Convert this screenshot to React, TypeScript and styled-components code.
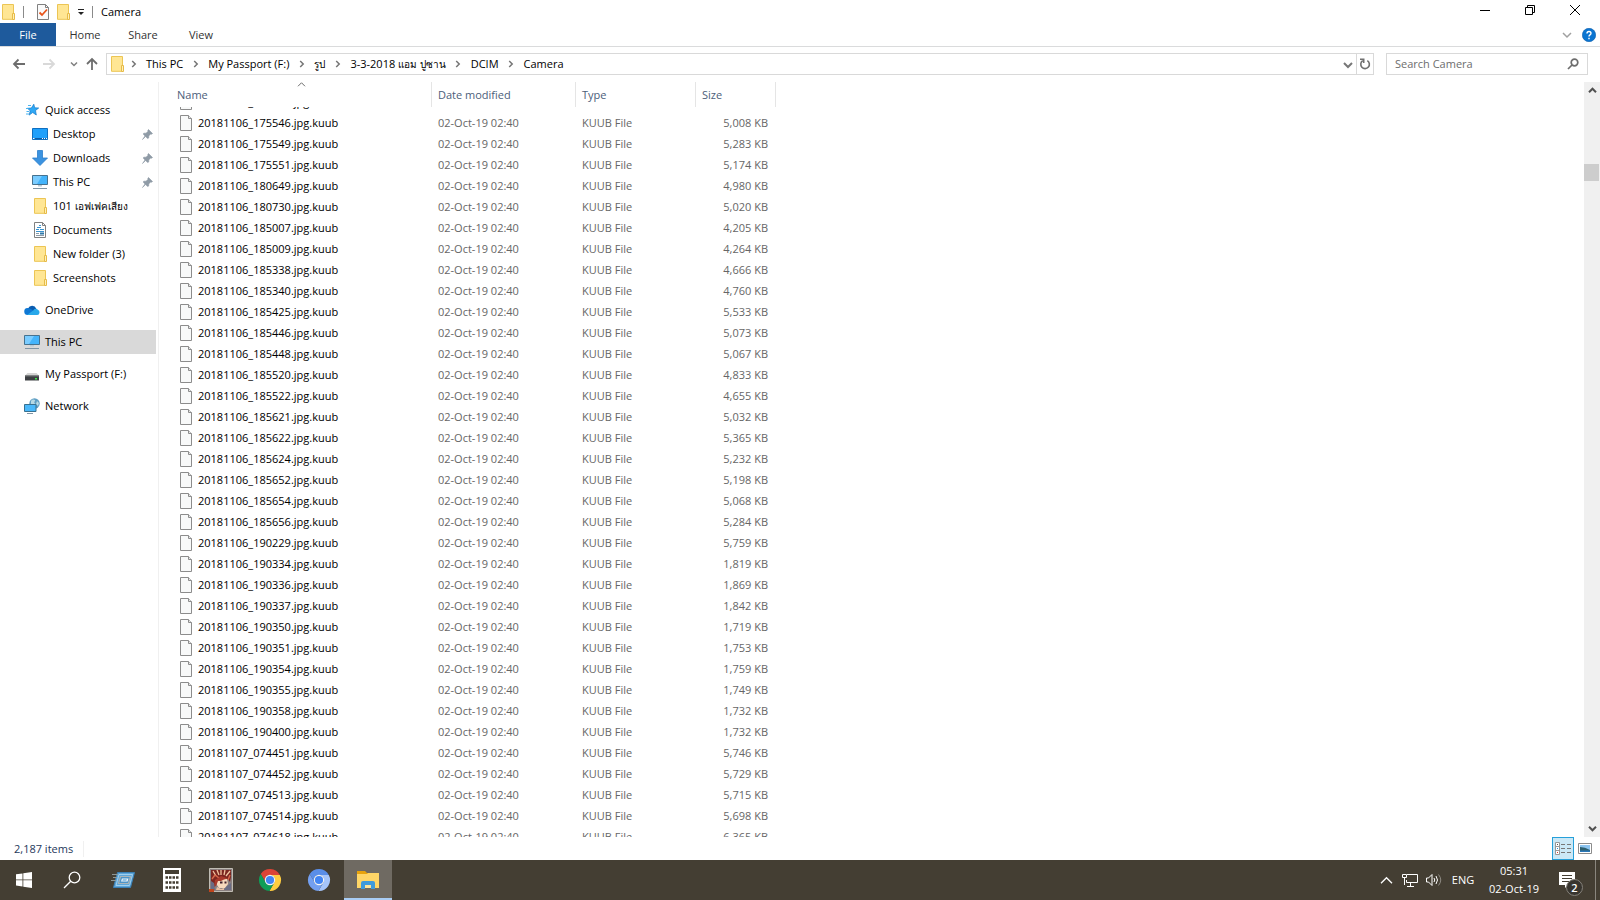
import React, { useLayoutEffect, useRef } from "react";
import styled, { createGlobalStyle, css } from "styled-components";

const GlobalStyle = createGlobalStyle`
  *, *::before, *::after { box-sizing: border-box; }
  body {
    margin: 0;
    background: #fff;
    color: #000;
    font: 11px/16px "Open Sans", "Noto Sans", "Liberation Sans", sans-serif;
  }
  button, input { font: inherit; color: inherit; }
  svg { display: block; flex: none; }
`;

const Window = styled.div`
  display: flex;
  flex-direction: column;
  height: 100vh;
  overflow: hidden;
`;

const PlainButton = styled.button`
  display: flex;
  align-items: center;
  justify-content: center;
  padding: 0;
  border: 0;
  background: none;
`;

/* ---------- title bar ---------- */

const TitleBar = styled.header`
  display: flex;
  align-items: center;
  height: 23px;
  padding-right: 3px;
`;

const QuickTools = styled.div`
  display: flex;
  align-items: center;
  gap: 6px;
`;

const TitleDivider = styled.span`
  width: 1px;
  height: 12px;
  margin: 0 1px;
  background: #8a8a8a;
`;

const WindowTitle = styled.h1`
  flex: 1;
  margin: 0 0 0 7px;
  font-size: 11px;
  font-weight: 400;
`;

const CaptionButton = styled(PlainButton)`
  align-self: flex-start;
  width: 45px;
  height: 20px;
`;

/* ---------- ribbon tabs ---------- */

const Ribbon = styled.nav`
  display: flex;
  align-items: center;
  height: 24px;
  border-bottom: 1px solid #dadbdc;
`;

const RibbonTab = styled.button<{ $file?: boolean }>`
  height: 23px;
  padding: 0;
  border: 0;
  width: ${(p) => (p.$file ? 56 : 58)}px;
  background: ${(p) => (p.$file ? "#1e5a9c" : "none")};
  color: ${(p) => (p.$file ? "#fff" : "#333")};
`;

const RibbonEnd = styled.div`
  display: flex;
  align-items: center;
  gap: 10px;
  margin-left: auto;
  padding-right: 4px;
`;

/* ---------- address row ---------- */

const AddressRow = styled.div`
  display: flex;
  align-items: center;
  height: 35px;
  padding: 0 12px 1px 11px;
`;

const NavButtons = styled.div`
  display: flex;
  align-items: center;
  width: 95px;
`;

const NavButton = styled(PlainButton)<{ $w: number }>`
  width: ${(p) => p.$w}px;
  height: 22px;
`;

const AddressBox = styled.div`
  display: flex;
  flex: 1;
  height: 22px;
  border: 1px solid #d9d9d9;
`;

const Crumbs = styled.ol`
  display: flex;
  flex: 1;
  align-items: center;
  margin: 0;
  padding: 0 0 0 2px;
  list-style: none;
`;

const CrumbRoot = styled.li`
  width: 12px;
`;

const Crumb = styled.li`
  display: flex;
  align-items: center;
`;

const CrumbChevron = styled.span`
  display: flex;
  justify-content: center;
  width: 25px;
`;

const CrumbLink = styled.a`
  color: #000;
  text-decoration: none;
  white-space: nowrap;
`;

const RefreshButton = styled(PlainButton)`
  width: 17px;
  border-left: 1px solid #d9d9d9;
`;

const SearchBox = styled.label`
  display: flex;
  align-items: center;
  width: 202px;
  height: 22px;
  margin-left: 12px;
  padding: 0 8px;
  border: 1px solid #d9d9d9;
`;

const SearchInput = styled.input`
  flex: 1;
  min-width: 0;
  padding: 0;
  border: 0;
  outline: 0;
  background: none;
  &::placeholder { color: #6d6d6d; opacity: 1; }
`;

/* ---------- body ---------- */

const Body = styled.div`
  display: flex;
  flex: 1;
  min-height: 0;
`;

const Sidebar = styled.nav`
  display: flex;
  flex-direction: column;
  gap: 8px;
  width: 159px;
  padding: 16px 2px 0 0;
  border-right: 1px solid #f0f0f0;
`;

const TreeGroup = styled.ul`
  margin: 0;
  padding: 0;
  list-style: none;
`;

const TreeLink = styled.a<{ $child?: boolean; $selected?: boolean }>`
  display: flex;
  align-items: center;
  gap: 5px;
  height: 24px;
  padding: 0 3px 0 ${(p) => (p.$child ? 32 : 24)}px;
  background: ${(p) => (p.$selected ? "#d9d9d9" : "none")};
  color: #000;
  text-decoration: none;
  white-space: nowrap;
`;

const TreeLabel = styled.span`
  flex: 1;
`;

const Thai = styled.span`
  font-size: 10px;
`;

const ListPane = styled.main`
  flex: 1;
  min-width: 0;
  overflow-y: auto;
  scrollbar-width: none;
`;

const FileTable = styled.table`
  width: 617px;
  table-layout: fixed;
  border-collapse: separate;
  border-spacing: 0;
`;

const ColumnHead = styled.th<{ $w: number; $first?: boolean }>`
  position: sticky;
  top: 0;
  width: ${(p) => p.$w}px;
  height: 25px;
  padding: 0 0 0 ${(p) => (p.$first ? 18 : 6)}px;
  border-right: 1px solid #e5e5e5;
  background: #fff;
  color: #4c607a;
  font-weight: 400;
  text-align: left;
`;

const SortMark = styled.span`
  position: absolute;
  top: -2px;
  left: calc(50% + 2px);
`;

const cell = css`
  height: 21px;
  padding: 0 8px 0 6px;
  color: #666;
  white-space: nowrap;
`;

const Cell = styled.td<{ $right?: boolean }>`
  ${cell}
  text-align: ${(p) => (p.$right ? "right" : "left")};
`;

const NameCell = styled.td`
  ${cell}
  padding-left: 21px;
  color: #000;
`;

const FileName = styled.span`
  display: flex;
  align-items: center;
  gap: 6px;
`;

const ScrollBar = styled.div`
  display: flex;
  flex-direction: column;
  width: 16px;
  background: #f0f0f0;
`;

const ScrollArrow = styled(PlainButton)`
  height: 17px;
`;

const ScrollTrack = styled.div`
  flex: 1;
  padding-top: 65px;
`;

const ScrollThumb = styled.div`
  height: 17px;
  margin-right: 1px;
  background: #cdcdcd;
`;

/* ---------- status bar ---------- */

const StatusBar = styled.footer`
  display: flex;
  align-items: center;
  height: 23px;
  padding-left: 14px;
  color: #1e395b;
`;

const StatusText = styled.span`
  padding-right: 10px;
  border-right: 1px solid #f0f0f0;
`;

const ViewSwitch = styled.div`
  display: flex;
  margin-left: auto;
  padding-right: 4px;
`;

const ViewButton = styled(PlainButton)<{ $on?: boolean }>`
  width: 22px;
  height: 23px;
  border: ${(p) => (p.$on ? "1px solid #26a0da" : "0")};
  background: ${(p) => (p.$on ? "#cbe8f6" : "none")};
`;

/* ---------- taskbar ---------- */

const Taskbar = styled.div`
  display: flex;
  height: 40px;
  background: #443e33;
  color: #fff;
`;

const TaskGroup = styled.div`
  display: flex;
  gap: 1px;
  padding-left: 3px;
`;

const TaskButton = styled(PlainButton)<{ $active?: boolean }>`
  width: 48px;
  height: 40px;
  background: ${(p) => (p.$active ? "#6f6a62" : "none")};
  box-shadow: ${(p) => (p.$active ? "inset 0 -2px #a9cdf5" : "none")};
`;

const Tray = styled.div`
  display: flex;
  align-items: center;
  margin-left: auto;
`;

const TrayButton = styled(PlainButton)<{ $w: number }>`
  width: ${(p) => p.$w}px;
  height: 40px;
`;

const Clock = styled.div`
  display: flex;
  flex-direction: column;
  align-items: center;
  width: 68px;
  line-height: 18px;
`;

const ActionCenter = styled(TrayButton)`
  position: relative;
  padding-right: 9px;
`;

const CountBadge = styled.span`
  position: absolute;
  left: 18px;
  top: 19px;
  width: 17px;
  height: 17px;
  border: 1px solid #85817a;
  border-radius: 50%;
  background: #38352f;
  font-weight: 600;
  line-height: 15px;
  text-align: center;
`;

const ShowDesktop = styled.button`
  width: 5px;
  height: 40px;
  padding: 0;
  border: 0;
  border-left: 1px solid #8a867e;
  background: none;
`;

/* ---------- icons ---------- */

type IconProps = { size?: number };

const Folder = ({ size = 16 }: IconProps) => (
  <svg width={size} height={size} viewBox="0 0 16 16">
    <path d="M2.5.5h11v14.8h-11z" fill="#ffe694" stroke="#ecc554" />
    <path d="M12.5 9.5h2v6h-2z" fill="#fff0b8" stroke="#e6bb48" />
  </svg>
);

const FilePage = () => (
  <svg width="12" height="16" viewBox="0 0 12 16">
    <path d="M.5.5h8l3 3v12H.5z" fill="#f8f9f9" stroke="#8c8c8c" />
    <path d="M8.5.5v3h3" fill="#e8e8e8" stroke="#8c8c8c" />
  </svg>
);

const CheckPage = () => (
  <svg width="12" height="16" viewBox="0 0 12 16">
    <path d="M.5.5h8l3 3v12H.5z" fill="#fafafa" stroke="#808080" />
    <path d="M8.5.5v3h3" fill="none" stroke="#808080" />
    <path d="M2.5 8.5 5 11l5-5.5" fill="none" stroke="#e8541a" strokeWidth="1.8" />
  </svg>
);

const Star = () => (
  <svg width="16" height="16" viewBox="0 0 16 16">
    <path d="m9.8 2.200.9 3.600 4 .2-3.200 2.500.8 4.500-3.600-2.500-3.500 2.600 1-4.300L3.500 6.300l3.900-.3z" fill="#2ea8f5" stroke="#1479c9" strokeWidth=".7" />
    <path d="M4 3.500h3M2 6.500h2.500M2.500 9.500h2.500M2 12h3" stroke="#4ab4f0" />
  </svg>
);

const DesktopIcon = () => (
  <svg width="16" height="16" viewBox="0 0 16 16">
    <path d="M.5 2.5h15v11H.5z" fill="#1fa0fb" stroke="#0f6fc0" />
    <path d="M1 12.5h14" stroke="#0a5ca8" />
    <path d="M1 12.5h1.5M10 12.5h1M12 12.5h1M14 12.5h1" stroke="#fff" />
  </svg>
);

const DownloadIcon = () => (
  <svg width="16" height="16" viewBox="0 0 16 16">
    <path d="M5.500 .5h5v7.500h5L8 15.500.5 8h5z" fill="#3b93e0" stroke="#2b7fcb" strokeWidth=".8" />
  </svg>
);

const PcIcon = () => (
  <svg width="16" height="16" viewBox="0 0 16 16">
    <path d="M.5 1.500h15v9H.5z" fill="#44b4fb" stroke="#46728f" />
    <path d="M1 2h9L5 10H1z" fill="#7accff" />
    <path d="M6 11h4v1.500H6z" fill="#b9cad5" />
    <path d="M1 14.500h14" stroke="#8095a5" />
  </svg>
);

const DocIcon = () => (
  <svg width="16" height="16" viewBox="0 0 16 16">
    <path d="M2.500.5h8l3 3v12h-11z" fill="#fff" stroke="#808080" />
    <path d="M10.500.5v3h3" fill="none" stroke="#808080" />
    <path d="M7 3.500h2M5 5.500h4M4 7.500h3M8 7.500h4M4 9.500h8" stroke="#3a93cf" />
    <path d="M4 11.500h3M4 13.500h8" stroke="#8b9aa6" />
    <path d="M8 10.500h4v2H8z" fill="#2f78a8" />
  </svg>
);

const CloudIcon = () => (
  <svg width="16" height="16" viewBox="0 0 16 16">
    <path d="M4 6.500a4.500 4.500 0 0 1 8.300.2L9 10l-5-3z" fill="#0a5cb0" />
    <path d="M4 13a3.500 3.500 0 0 1-.5-7c2 0 3.500 1 5 2L12 13z" fill="#0f78d4" />
    <path d="M3 13 9.500 8.200c1-1.700 3.500-1.800 4.300-.4A2.700 2.700 0 0 1 13.200 13z" fill="#28a8ea" />
  </svg>
);

const DriveIcon = () => (
  <svg width="16" height="16" viewBox="0 0 16 16">
    <path d="M3.500 7h9L15 9.500H1z" fill="#d4d4d4" />
    <path d="M1 9.500h14v5H1z" fill="#3d4043" />
    <path d="M1 10h14" stroke="#6d7073" />
    <path d="M11 12h2v1.500h-2z" fill="#3bea4a" />
  </svg>
);

const NetworkIcon = () => (
  <svg width="16" height="16" viewBox="0 0 16 16">
    <circle cx="10.500" cy="5.500" r="5.200" fill="#5f9fc4" />
    <path d="M7 3c2-3 5-1 4 0s-1 2 .5 3S8 7 7 6zM13 3l2 2-1 3-2-2z" fill="#b7d9e4" />
    <path d="M.5 6.500h11.500v7H.5z" fill="#4ab8fa" stroke="#38708f" />
    <path d="M3 15.500h6" stroke="#8095a5" />
  </svg>
);

const PinIcon = () => (
  <svg width="11" height="11" viewBox="0 0 11 11">
    <path d="M6.500.5 10.500 4.500 9.500 5.200 8.700 4.900 6.800 6.900 6.700 9 5.600 9.500 3.600 7.500.5 10.500 3 7 1.200 5 1.800 4.200 4 4.200 6.100 2.300 5.800 1.300z" fill="#8f9ba6" stroke="#8f9ba6" strokeWidth=".6" />
  </svg>
);

const Arrow = ({ color, up }: { color: string; up?: boolean }) => (
  <svg width="14" height="14" viewBox="0 0 14 14" fill="none" stroke={color} strokeWidth="1.800">
    {up ? <path d="M7 13V2M2 7l5-5 5 5" /> : <path d="M13 7H2M6.500 2.500 2 7l4.500 4.500" />}
  </svg>
);

const Chevron = ({ dir, color, w = 8, stroke = 2 }: { dir: "up" | "down"; color: string; w?: number; stroke?: number }) => (
  <svg width={w} height={w} viewBox={`0 0 ${w} ${w}`} fill="none" stroke={color} strokeWidth={stroke}>
    <path
      d={`M1 ${w / 4 + 0.5} ${w / 2} ${(w * 3) / 4 - 0.5} ${w - 1} ${w / 4 + 0.5}`}
      transform={`rotate(${dir === "up" ? 180 : 0} ${w / 2} ${w / 2})`}
    />
  </svg>
);

const CrumbMark = () => (
  <svg width="6" height="8" viewBox="0 0 6 8" fill="none" stroke="#757575" strokeWidth="1.500">
    <path d="M1.200 1 4.200 4l-3 3" />
  </svg>
);

const WindowsLogo = () => (
  <svg width="16" height="16" viewBox="0 0 16 16" fill="#fff">
    <path d="M0 2.300 6.500 1.400v6.100H0zM7.300 1.300 16 0v7.500H7.300zM0 8.300h6.500v6.200L0 13.600zM7.300 8.300H16V16l-8.700-1.300z" />
  </svg>
);

const TaskSearch = () => (
  <svg width="18" height="18" viewBox="0 0 18 18" fill="none" stroke="#fff" strokeWidth="1.300">
    <circle cx="11.500" cy="6.500" r="5.300" />
    <path d="M7.700 10.300 1 17" />
  </svg>
);

const RunIcon = () => (
  <svg width="24" height="20" viewBox="0 0 24 20">
    <path d="M6.500 2.500h17l-4 15h-17z" fill="#5fa6d8" stroke="#3a7fb4" />
    <path d="M8 4.500h13.500L18.500 15.500H5z" fill="none" stroke="#9fd0f0" />
    <path d="M9.500 6.500h10l-2 7h-10z" fill="#4d94c8" stroke="#a9b4b8" strokeWidth="1.200" />
    <path d="M11 8.500h6.500l-1 3H10z" fill="#f0f7fc" />
    <path d="M11.800 9.500h4l-.4 1h-4z" fill="#3f8fc8" />
    <path d="M1 4.500h6M2 7.500h4M0 10.500h5" stroke="#8c9696" />
  </svg>
);

const CalcIcon = () => (
  <svg width="18" height="24" viewBox="0 0 18 24">
    <path d="M0 0h18v24H0z" fill="#fff" />
    <path d="M2 2h14v4H2z" fill="#443e33" />
    <path d="M2.500 9.500h13M2.500 14.500h13M2.500 19.500h13" stroke="#443e33" strokeWidth="2.500" strokeDasharray="2.500 1" />
  </svg>
);

const GameIcon = () => (
  <svg width="24" height="24" viewBox="0 0 24 24">
    <path d="M.5.5h23v23H.5z" fill="#8a8080" stroke="#c0bcb4" />
    <path d="M2 2h20v7l-1 5-2-3-4 1-4-2-4 3-1 5-4 2z" fill="#7c2620" />
    <path d="M4 3l3 5M8 2l2 5M12 2v5M16 2l-1 5M21 3l-4 5" stroke="#f0c4a0" strokeWidth="1.300" />
    <path d="M3 11l3-4M19 12l2-5M6 7l4 3" stroke="#d86a4c" strokeWidth="1.400" />
    <path d="M8 13l4-3 6 1 1 5-3 4H10l-2-3z" fill="#f6d8bc" />
    <path d="M6 12l6-4 7 2.500-4 1-3 1.500-3 0-2 5-2 1z" fill="#a83a2c" />
    <path d="M11 14.500h2.500M15.500 14.500h2" stroke="#40202c" strokeWidth="1.800" />
    <path d="M2 13l3 2 1 7H2zM17 19l5-4v7h-7z" fill="#6a6c84" />
    <path d="M8 19l4 2 3-1v2H7z" fill="#e8c0a4" />
    <path d="M0 21h5v3H0z" fill="#c0441c" />
  </svg>
);

const BrowserIcon = ({ a, b, c }: { a: string; b: string; c: string }) => {
  const blade = "M12 7H21.800A11 11 0 0 0 2.770 6.010L7.670 14.500A5 5 0 0 1 12 7Z";
  return (
    <svg width="24" height="24" viewBox="0 0 24 24">
      <path d={blade} fill={a} />
      <path d={blade} fill={b} transform="rotate(120 12 12)" />
      <path d={blade} fill={c} transform="rotate(240 12 12)" />
      <circle cx="12" cy="12" r="5.200" fill="#f4f6f8" />
      <circle cx="12" cy="12" r="4.100" fill="#4285f4" />
    </svg>
  );
};

const ExplorerIcon = () => (
  <svg width="22" height="20" viewBox="0 0 22 20">
    <path d="M0 2V1h8l2 2h11v5H0z" fill="#e8a30c" />
    <path d="M0 4h10l1-1h11v15H0z" fill="#ffd667" />
    <path d="M4 19v-6q0-2 2-2h10q2 0 2 2v6h-4v-4H8v4z" fill="#3f9bdc" />
    <path d="M8 15h6v3H8z" fill="#ffe59a" />
  </svg>
);

const TrayNetwork = () => (
  <svg width="16" height="14" viewBox="0 0 16 14" fill="none" stroke="#fff">
    <path d="M5 1.500h10.500v8H4.500V7M8.500 10v3M5 13.500h7" />
    <path d="M.5 1.500h4v3h-4zM2.500 5v7" />
  </svg>
);

const TrayVolume = () => (
  <svg width="16" height="14" viewBox="0 0 16 14" fill="none" stroke="#fff">
    <path d="M.5 5h2L6 1.500v11L2.500 9h-2z" />
    <path d="M8 5q1.500 2 0 4M10 3q3 4 0 8" />
    <path d="M12.500 1.500q4.500 5.500 0 11" stroke="#8f8b84" />
  </svg>
);

const NoteIcon = () => (
  <svg width="16" height="16" viewBox="0 0 16 16">
    <path d="M0 0h16v13H9l-3 3v-3H0z" fill="#fff" />
    <path d="M3 3.500h10M3 6.500h10M3 9.500h7" stroke="#443e33" />
  </svg>
);

/* ---------- data ---------- */

const files: [string, string][] = [
  ["20181106_175544", "5,012"], ["20181106_175546", "5,008"], ["20181106_175549", "5,283"],
  ["20181106_175551", "5,174"], ["20181106_180649", "4,980"], ["20181106_180730", "5,020"],
  ["20181106_185007", "4,205"], ["20181106_185009", "4,264"], ["20181106_185338", "4,666"],
  ["20181106_185340", "4,760"], ["20181106_185425", "5,533"], ["20181106_185446", "5,073"],
  ["20181106_185448", "5,067"], ["20181106_185520", "4,833"], ["20181106_185522", "4,655"],
  ["20181106_185621", "5,032"], ["20181106_185622", "5,365"], ["20181106_185624", "5,232"],
  ["20181106_185652", "5,198"], ["20181106_185654", "5,068"], ["20181106_185656", "5,284"],
  ["20181106_190229", "5,759"], ["20181106_190334", "1,819"], ["20181106_190336", "1,869"],
  ["20181106_190337", "1,842"], ["20181106_190350", "1,719"], ["20181106_190351", "1,753"],
  ["20181106_190354", "1,759"], ["20181106_190355", "1,749"], ["20181106_190358", "1,732"],
  ["20181106_190400", "1,732"], ["20181107_074451", "5,746"], ["20181107_074452", "5,729"],
  ["20181107_074513", "5,715"], ["20181107_074514", "5,698"], ["20181107_074618", "6,365"],
];

type TreeItem = { label: string; thai?: string; icon: React.ReactNode; child?: boolean; pinned?: boolean; selected?: boolean };

const tree: TreeItem[][] = [
  [
    { label: "Quick access", icon: <Star /> },
    { label: "Desktop", icon: <DesktopIcon />, child: true, pinned: true },
    { label: "Downloads", icon: <DownloadIcon />, child: true, pinned: true },
    { label: "This PC", icon: <PcIcon />, child: true, pinned: true },
    { label: "101 ", thai: "เอฟเฟคเสียง", icon: <Folder />, child: true },
    { label: "Documents", icon: <DocIcon />, child: true },
    { label: "New folder (3)", icon: <Folder />, child: true },
    { label: "Screenshots", icon: <Folder />, child: true },
  ],
  [{ label: "OneDrive", icon: <CloudIcon /> }],
  [{ label: "This PC", icon: <PcIcon />, selected: true }],
  [{ label: "My Passport (F:)", icon: <DriveIcon /> }],
  [{ label: "Network", icon: <NetworkIcon /> }],
];

const crumbs: { label: string; thai?: string }[] = [
  { label: "This PC" },
  { label: "My Passport (F:)" },
  { label: "", thai: "รูป" },
  { label: "3-3-2018 ", thai: "แอม ปูซาน" },
  { label: "DCIM" },
  { label: "Camera" },
];

/* ---------- page ---------- */

export default function App() {
  const pane = useRef<HTMLElement>(null);

  useLayoutEffect(() => {
    if (pane.current) pane.current.scrollTop = 16;
  }, []);

  return (
    <Window>
      <GlobalStyle />
      <TitleBar>
        <QuickTools>
          <Folder />
          <TitleDivider />
          <span />
          <PlainButton aria-label="Properties"><CheckPage /></PlainButton>
          <PlainButton aria-label="New folder"><Folder /></PlainButton>
          <PlainButton aria-label="Customize toolbar">
            <svg width="8" height="8" viewBox="0 0 8 8"><path d="M1 1.500h6" stroke="#222" /><path d="M1 4h6L4 7z" fill="#222" /></svg>
          </PlainButton>
          <TitleDivider />
        </QuickTools>
        <WindowTitle>Camera</WindowTitle>
        <CaptionButton aria-label="Minimize">
          <svg width="10" height="10" viewBox="0 0 10 10"><path d="M0 5.500h10" stroke="#000" /></svg>
        </CaptionButton>
        <CaptionButton aria-label="Restore">
          <svg width="10" height="10" viewBox="0 0 10 10" fill="none" stroke="#000"><path d="M.5 2.500h7v7h-7zM2.500 2V.5h7v7H8" /></svg>
        </CaptionButton>
        <CaptionButton aria-label="Close">
          <svg width="10" height="10" viewBox="0 0 10 10"><path d="m0 0 10 10M10 0 0 10" stroke="#000" /></svg>
        </CaptionButton>
      </TitleBar>

      <Ribbon>
        <RibbonTab $file>File</RibbonTab>
        <RibbonTab>Home</RibbonTab>
        <RibbonTab>Share</RibbonTab>
        <RibbonTab>View</RibbonTab>
        <RibbonEnd>
          <PlainButton aria-label="Expand ribbon"><Chevron dir="down" color="#a0a0a0" w={10} stroke={1.5} /></PlainButton>
          <PlainButton aria-label="Help">
            <svg width="14" height="14" viewBox="0 0 14 14">
              <circle cx="7" cy="7" r="6.700" fill="#0b75d1" stroke="#0a5cab" strokeWidth=".6" />
              <path d="M5 5.500q0-2 2-2t2 1.800q0 1-1 1.600T7 8.600M7 9.800v1.500" fill="none" stroke="#fff" strokeWidth="1.400" />
            </svg>
          </PlainButton>
        </RibbonEnd>
      </Ribbon>

      <AddressRow>
        <NavButtons>
          <NavButton $w={16} aria-label="Back"><Arrow color="#6d6d6d" /></NavButton>
          <NavButton $w={44} aria-label="Forward">
            <svg width="14" height="14" viewBox="0 0 14 14" fill="none" stroke="#d9d9d9" strokeWidth="1.800">
              <path d="M1 7h11M7.500 2.500 12 7l-4.500 4.500" />
            </svg>
          </NavButton>
          <NavButton $w={8} aria-label="Recent locations"><Chevron dir="down" color="#808080" w={8} stroke={1.5} /></NavButton>
          <NavButton $w={28} aria-label="Up"><Arrow color="#6d6d6d" up /></NavButton>
        </NavButtons>
        <AddressBox>
          <Crumbs>
            <CrumbRoot><Folder /></CrumbRoot>
            {crumbs.map(({ label, thai }) => (
              <Crumb key={label}>
                <CrumbChevron><CrumbMark /></CrumbChevron>
                <CrumbLink href="#">{label}{thai && <Thai lang="th">{thai}</Thai>}</CrumbLink>
              </Crumb>
            ))}
          </Crumbs>
          <NavButton $w={16} aria-label="Previous locations"><Chevron dir="down" color="#777" w={10} /></NavButton>
          <RefreshButton aria-label="Refresh">
            <svg width="12" height="12" viewBox="0 0 12 12" fill="none" stroke="#707070" strokeWidth="1.600">
              <path d="M8.300 2.600A4.300 4.300 0 1 1 3.700 2.700M1 1.300h3.700v3.700" />
            </svg>
          </RefreshButton>
        </AddressBox>
        <SearchBox>
          <SearchInput aria-label="Search Camera" placeholder="Search Camera" />
          <svg width="12" height="12" viewBox="0 0 12 12" fill="none" stroke="#6d6d6d" strokeWidth="1.700">
            <circle cx="7.500" cy="4.500" r="3.300" />
            <path d="M5 7 1 11" />
          </svg>
        </SearchBox>
      </AddressRow>

      <Body>
        <Sidebar aria-label="Folders">
          {tree.map((group, i) => (
            <TreeGroup key={i}>
              {group.map((item) => (
                <li key={item.label}>
                  <TreeLink href="#" $child={item.child} $selected={item.selected}>
                    {item.icon}
                    <TreeLabel>{item.label}{item.thai && <Thai lang="th">{item.thai}</Thai>}</TreeLabel>
                    {item.pinned && <PinIcon />}
                  </TreeLink>
                </li>
              ))}
            </TreeGroup>
          ))}
        </Sidebar>

        <ListPane ref={pane}>
          <FileTable>
            <thead>
              <tr>
                <ColumnHead $w={273} $first>
                  Name
                  <SortMark><Chevron dir="up" color="#6d6d6d" w={9} stroke={1} /></SortMark>
                </ColumnHead>
                <ColumnHead $w={144}>Date modified</ColumnHead>
                <ColumnHead $w={120}>Type</ColumnHead>
                <ColumnHead $w={80}>Size</ColumnHead>
              </tr>
            </thead>
            <tbody>
              {files.map(([name, size]) => (
                <tr key={name}>
                  <NameCell><FileName><FilePage />{name}.jpg.kuub</FileName></NameCell>
                  <Cell>02-Oct-19 02:40</Cell>
                  <Cell>KUUB File</Cell>
                  <Cell $right>{size} KB</Cell>
                </tr>
              ))}
            </tbody>
          </FileTable>
        </ListPane>

        <ScrollBar>
          <ScrollArrow aria-label="Scroll up"><Chevron dir="up" color="#505050" w={9} /></ScrollArrow>
          <ScrollTrack><ScrollThumb /></ScrollTrack>
          <ScrollArrow aria-label="Scroll down"><Chevron dir="down" color="#505050" w={9} /></ScrollArrow>
        </ScrollBar>
      </Body>

      <StatusBar>
        <StatusText>2,187 items</StatusText>
        <ViewSwitch>
          <ViewButton $on aria-label="Details view">
            <svg width="16" height="14" viewBox="0 0 16 14">
              <path d="M.5.5h4v12h-4zM.5 4.500h4M.5 8.500h4" fill="#fff" stroke="#999" />
              <path d="M2 2.500h1" stroke="#555" /><path d="M2 6.500h1" stroke="#2a8fd8" /><path d="M2 10.500h1" stroke="#d83a2a" />
              <path d="M6 2.500h4M12 2.500h4M6 6.500h4M12 6.500h4M6 10.500h4M12 10.500h4" stroke="#777" />
            </svg>
          </ViewButton>
          <ViewButton aria-label="Thumbnail view">
            <svg width="14" height="12" viewBox="0 0 14 12">
              <path d="M.5.5h13v10H.5z" fill="#fff" stroke="#8c8c8c" />
              <path d="M2 2h10v7H2z" fill="#8cc4f0" />
              <path d="M2 4q5 0 10 3v1H2z" fill="#2d5f6e" />
              <path d="M2 7.500h10V9H2z" fill="#2a78b8" />
            </svg>
          </ViewButton>
        </ViewSwitch>
      </StatusBar>

      <Taskbar>
        <TaskButton aria-label="Start"><WindowsLogo /></TaskButton>
        <TaskButton aria-label="Search"><TaskSearch /></TaskButton>
        <TaskGroup>
          <TaskButton aria-label="Run"><RunIcon /></TaskButton>
          <TaskButton aria-label="Calculator"><CalcIcon /></TaskButton>
          <TaskButton aria-label="Game"><GameIcon /></TaskButton>
          <TaskButton aria-label="Chrome"><BrowserIcon a="#db4437" b="#ffcd40" c="#0f9d58" /></TaskButton>
          <TaskButton aria-label="Chromium"><BrowserIcon a="#5a8ee8" b="#a5c4fa" c="#739ff0" /></TaskButton>
          <TaskButton $active aria-label="File Explorer"><ExplorerIcon /></TaskButton>
        </TaskGroup>
        <Tray>
          <TrayButton $w={24} aria-label="Show hidden icons"><Chevron dir="up" color="#fff" w={13} stroke={1.3} /></TrayButton>
          <TrayButton $w={24} aria-label="Network"><TrayNetwork /></TrayButton>
          <TrayButton $w={24} aria-label="Volume"><TrayVolume /></TrayButton>
          <TrayButton $w={34} aria-label="Language">ENG</TrayButton>
          <Clock>
            <time>05:31</time>
            <time>02-Oct-19</time>
          </Clock>
          <ActionCenter $w={47} aria-label="Notifications">
            <NoteIcon />
            <CountBadge>2</CountBadge>
          </ActionCenter>
          <ShowDesktop aria-label="Show desktop" />
        </Tray>
      </Taskbar>
    </Window>
  );
}
